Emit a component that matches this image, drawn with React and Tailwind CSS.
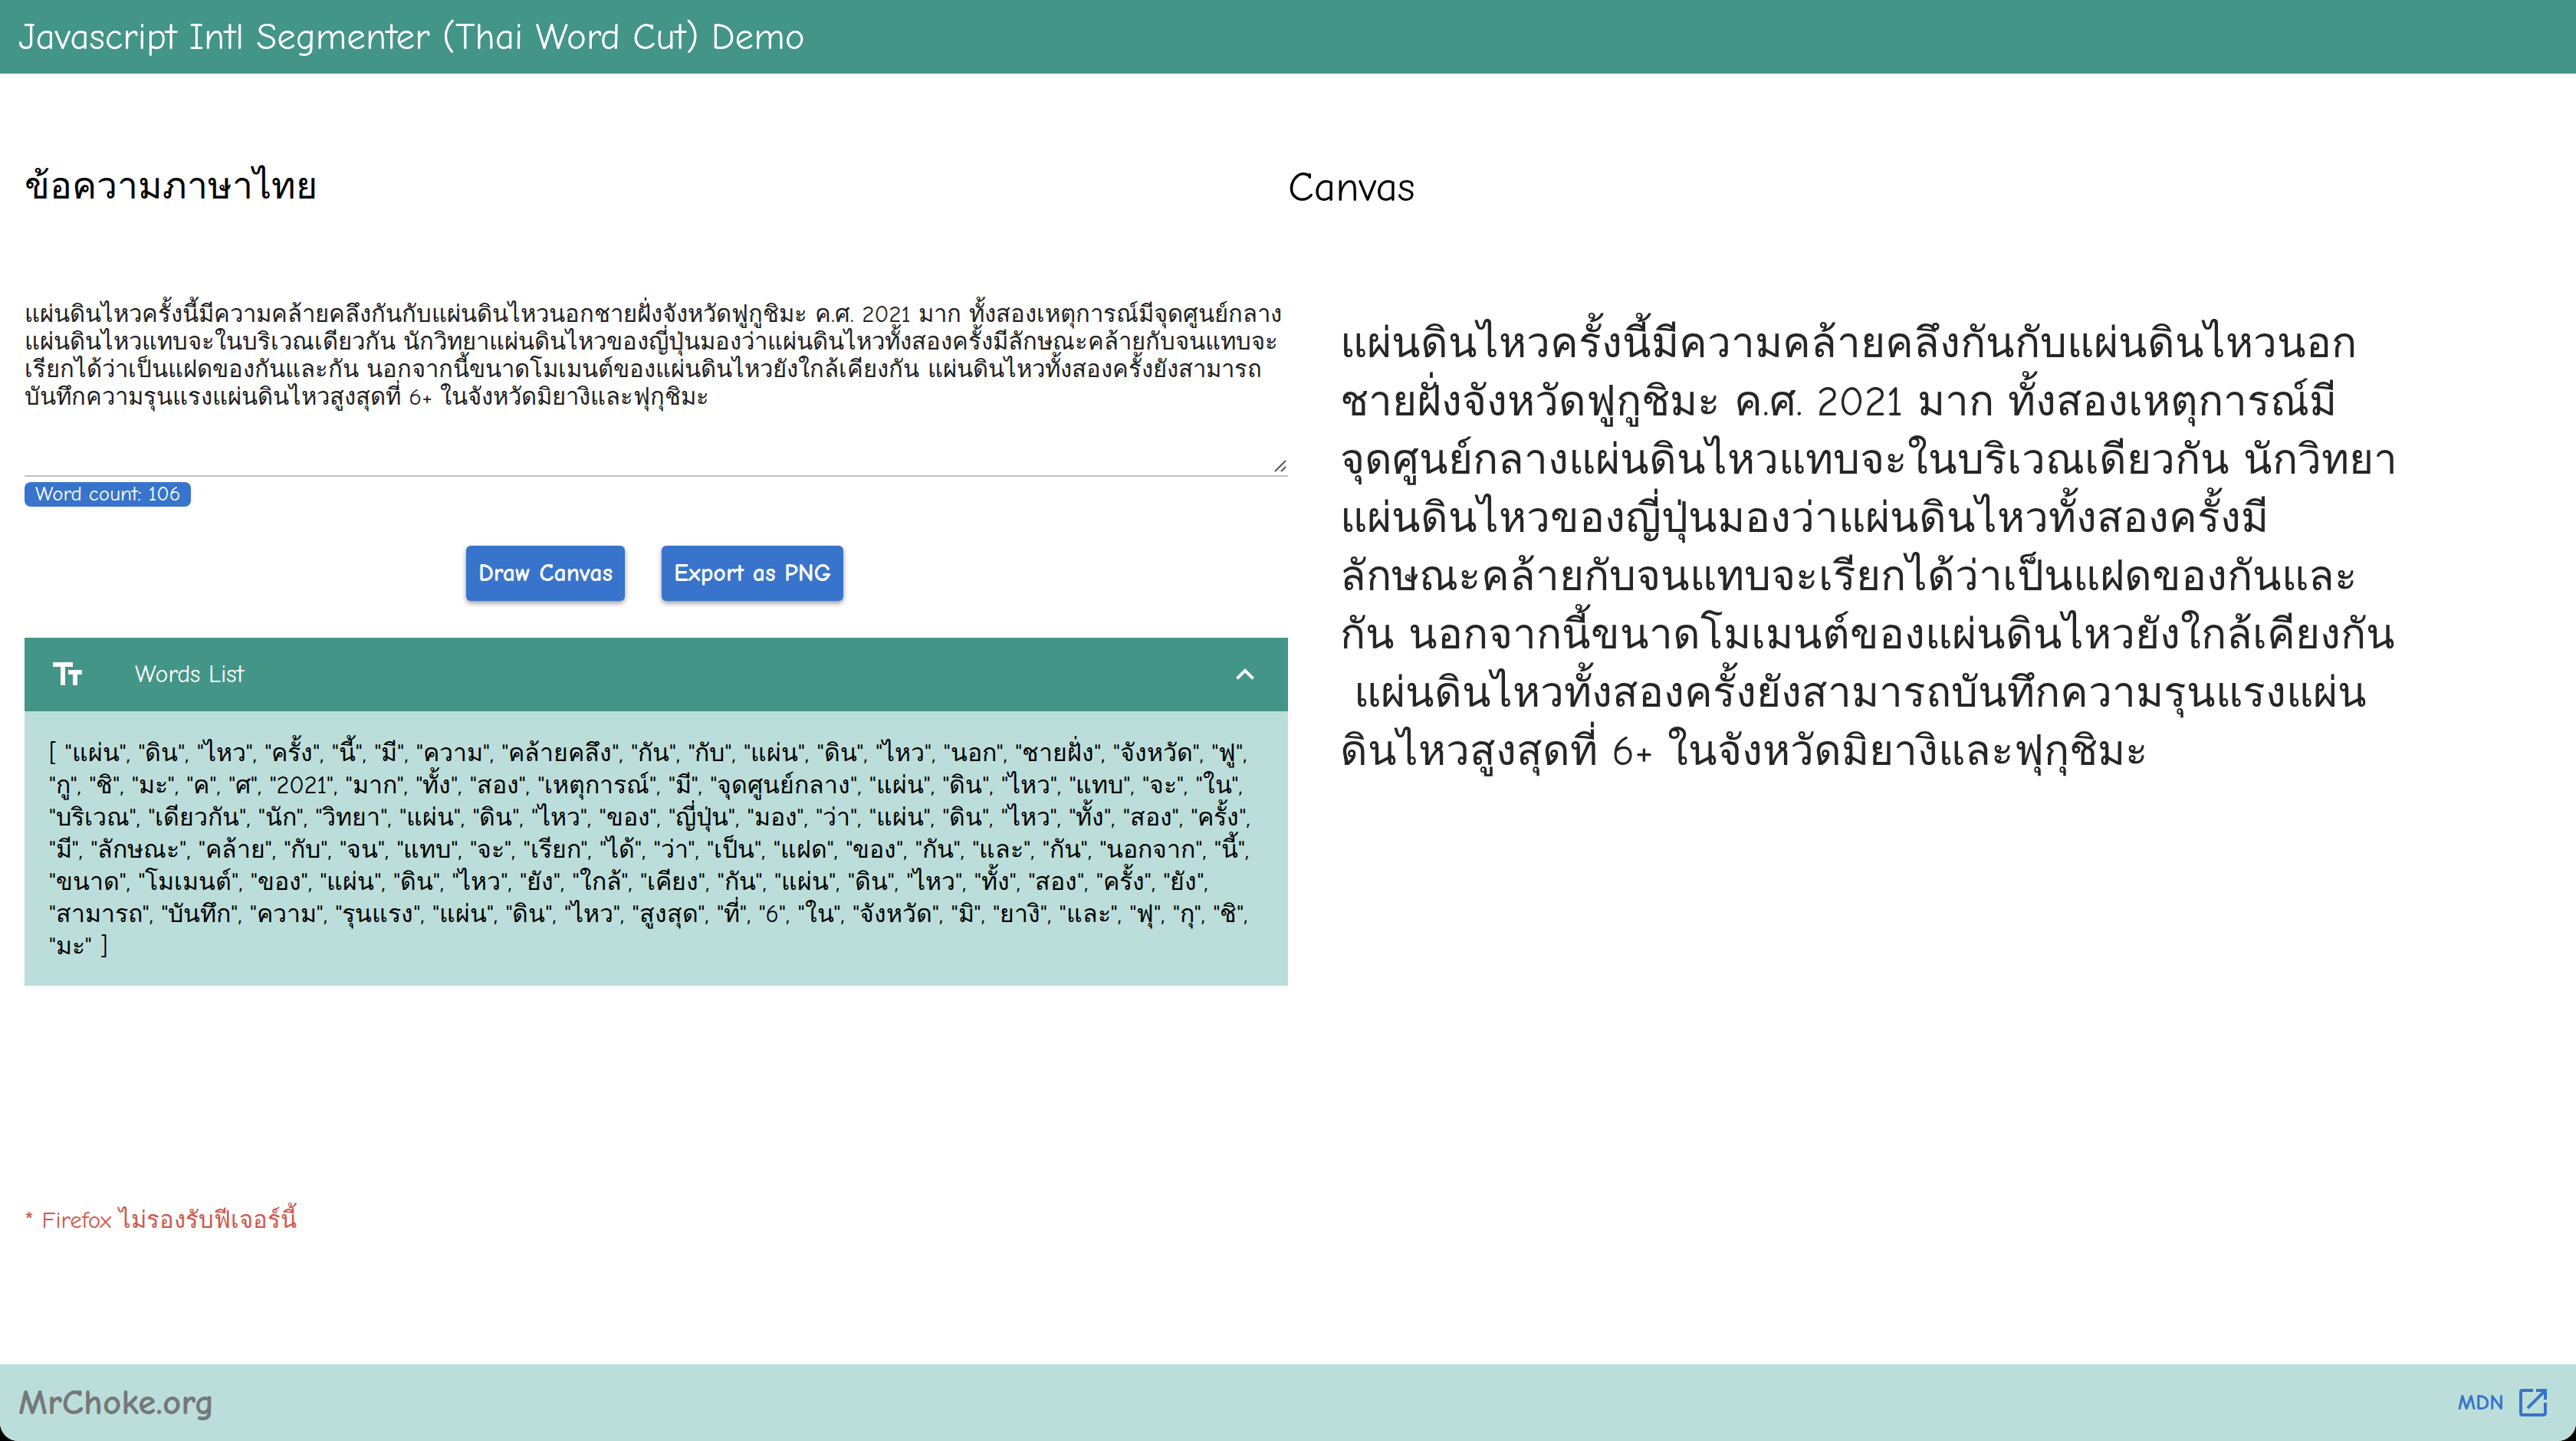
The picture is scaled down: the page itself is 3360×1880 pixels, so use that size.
import { useState } from "react";
import { MdExpandLess, MdExpandMore, MdOpenInNew, MdTextFields } from "react-icons/md";

const MESSAGE = [
  "แผ่นดินไหวครั้งนี้มีความคล้ายคลึงกันกับแผ่นดินไหวนอกชายฝั่งจังหวัดฟูกูชิมะ ค.ศ. 2021 มาก ทั้งสองเหตุการณ์มีจุดศูนย์กลาง",
  "แผ่นดินไหวแทบจะในบริเวณเดียวกัน นักวิทยาแผ่นดินไหวของญี่ปุ่นมองว่าแผ่นดินไหวทั้งสองครั้งมีลักษณะคล้ายกับจนแทบจะ",
  "เรียกได้ว่าเป็นแฝดของกันและกัน นอกจากนี้ขนาดโมเมนต์ของแผ่นดินไหวยังใกล้เคียงกัน แผ่นดินไหวทั้งสองครั้งยังสามารถ",
  "บันทึกความรุนแรงแผ่นดินไหวสูงสุดที่ 6+ ในจังหวัดมิยางิและฟุกุชิมะ",
].join("\n");

const WORD_ROWS = [
  "แผ่น ดิน ไหว ครั้ง นี้ มี ความ คล้ายคลึง กัน กับ แผ่น ดิน ไหว นอก ชายฝั่ง จังหวัด ฟู",
  "กู ชิ มะ ค ศ 2021 มาก ทั้ง สอง เหตุการณ์ มี จุดศูนย์กลาง แผ่น ดิน ไหว แทบ จะ ใน",
  "บริเวณ เดียวกัน นัก วิทยา แผ่น ดิน ไหว ของ ญี่ปุ่น มอง ว่า แผ่น ดิน ไหว ทั้ง สอง ครั้ง",
  "มี ลักษณะ คล้าย กับ จน แทบ จะ เรียก ได้ ว่า เป็น แฝด ของ กัน และ กัน นอกจาก นี้",
  "ขนาด โมเมนต์ ของ แผ่น ดิน ไหว ยัง ใกล้ เคียง กัน แผ่น ดิน ไหว ทั้ง สอง ครั้ง ยัง",
  "สามารถ บันทึก ความ รุนแรง แผ่น ดิน ไหว สูงสุด ที่ 6 ใน จังหวัด มิ ยางิ และ ฟุ กุ ชิ",
  "มะ",
];

const WORDS_TEXT = `[ ${WORD_ROWS.map((row) =>
  row
    .split(" ")
    .map((word) => `"${word}"`)
    .join(", ")
).join(",\n")} ]`;

const CANVAS_LINES = [
  "แผ่นดินไหวครั้งนี้มีความคล้ายคลึงกันกับแผ่นดินไหวนอก",
  "ชายฝั่งจังหวัดฟูกูชิมะ ค.ศ. 2021 มาก ทั้งสองเหตุการณ์มี",
  "จุดศูนย์กลางแผ่นดินไหวแทบจะในบริเวณเดียวกัน นักวิทยา",
  "แผ่นดินไหวของญี่ปุ่นมองว่าแผ่นดินไหวทั้งสองครั้งมี",
  "ลักษณะคล้ายกับจนแทบจะเรียกได้ว่าเป็นแฝดของกันและ",
  "กัน นอกจากนี้ขนาดโมเมนต์ของแผ่นดินไหวยังใกล้เคียงกัน",
  " แผ่นดินไหวทั้งสองครั้งยังสามารถบันทึกความรุนแรงแผ่น",
  "ดินไหวสูงสุดที่ 6+ ในจังหวัดมิยางิและฟุกุชิมะ",
];

function ActionButton({ children }) {
  return (
    <button
      type="button"
      className="h-18 rounded-md bg-[#3874cb] px-4 text-[32px] font-bold text-white shadow-[0_3px_6px_rgba(0,0,0,0.4)]"
    >
      {children}
    </button>
  );
}

export default function App() {
  const [message, setMessage] = useState(MESSAGE);
  const [open, setOpen] = useState(true);
  const Chevron = open ? MdExpandLess : MdExpandMore;

  return (
    <div className="min-h-screen bg-black font-['Comic_Neue',cursive]">
      <div className="flex min-h-screen flex-col overflow-hidden rounded-b-3xl bg-white text-black">
        <header className="flex h-24 items-center bg-[#439587] px-6">
          <h1 className="text-[49px] leading-[60px] text-white">Javascript Intl Segmenter (Thai Word Cut) Demo</h1>
        </header>

        <main className="grid flex-1 grid-cols-2">
          <section className="flex flex-col pl-8">
            <label htmlFor="message" className="mt-27 h-20 text-5xl leading-[80px]">
              ข้อความภาษาไทย
            </label>

            <div className="relative mt-23">
              <textarea
                id="message"
                value={message}
                onChange={(e) => setMessage(e.target.value)}
                spellCheck={false}
                className="block h-[246px] w-full resize-none overflow-hidden border-b-2 border-[#c2c2c2] bg-transparent pt-4 text-[31px] leading-9 text-[#212121] outline-none"
              />
              <svg viewBox="0 0 16 16" className="absolute right-0.5 bottom-1.5 size-4 text-[#555]" aria-hidden="true">
                <path d="M1 15 15 1M9 15l6-6" stroke="currentColor" strokeWidth="2" fill="none" />
              </svg>
            </div>

            <span className="mt-[7px] h-8 self-start rounded-lg bg-[#3874cb] px-3.5 text-[27px] leading-8 text-white">
              Word count: 106
            </span>

            <div className="mt-[51px] flex justify-center gap-12 pr-1">
              <ActionButton>Draw Canvas</ActionButton>
              <ActionButton>Export as PNG</ActionButton>
            </div>

            <div className="mt-12">
              <button
                type="button"
                aria-expanded={open}
                onClick={() => setOpen(!open)}
                className="flex h-24 w-full items-center bg-[#439587] px-8 text-left text-white"
              >
                <MdTextFields className="size-12" />
                <span className="ml-16 flex-1 text-[32px]">Words List</span>
                <Chevron className="size-12" />
              </button>
              {open && (
                <p className="bg-[#bcdeda] px-8 pt-[34px] pb-[30px] text-[32px] leading-[42px] whitespace-pre">
                  {WORDS_TEXT}
                </p>
              )}
            </div>

            <p className="mt-auto mb-[168px] text-[31px] leading-10 text-[#d0584b]">* Firefox ไม่รองรับฟีเจอร์นี้</p>
          </section>

          <section>
            <h2 className="mt-27 h-20 text-[55px] leading-[80px]">Canvas</h2>
            <div
              role="img"
              aria-label="Canvas preview"
              className="mt-[126px] pl-17 text-[55px] leading-[76px] whitespace-pre text-[#262626]"
            >
              {CANVAS_LINES.map((line) => (
                <p key={line}>{line}</p>
              ))}
            </div>
          </section>
        </main>

        <footer className="flex h-25 items-center justify-between bg-[#bcdeda] pr-8 pl-6">
          <span className="text-[47px] font-bold text-[#757879]">MrChoke.org</span>
          <a
            href="https://developer.mozilla.org/"
            className="flex items-center gap-3.5 text-[29px] font-bold text-[#3874cb]"
          >
            MDN
            <MdOpenInNew className="size-12" />
          </a>
        </footer>
      </div>
    </div>
  );
}
